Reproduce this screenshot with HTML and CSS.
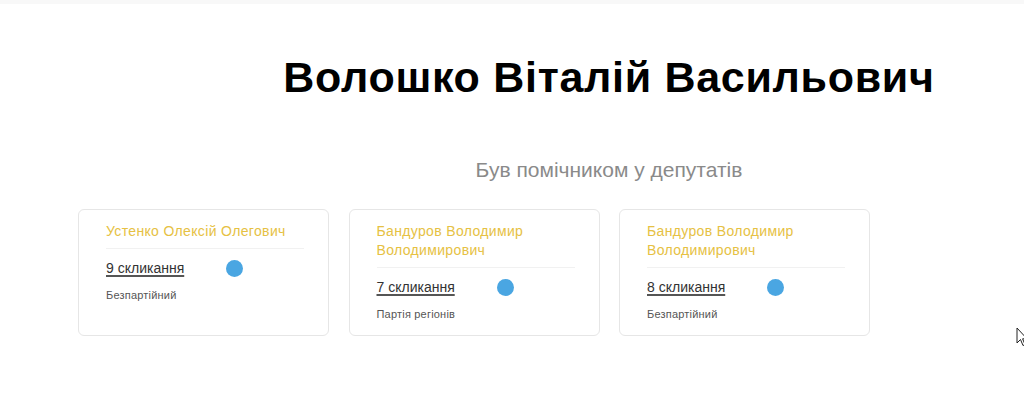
FILE: index.html
```html
<!DOCTYPE html>
<html lang="uk">
<head>
  <meta charset="UTF-8" />
  <meta name="viewport" content="width=device-width, initial-scale=1" />
  <title>Волошко Віталій Васильович</title>
  <link rel="stylesheet" href="styles.css">
</head>
<body>
  <div class="topbar"></div>

  <div class="page">
    <h1 class="person-name">Волошко Віталій Васильович</h1>
    <h2 class="section-title">Був помічником у депутатів</h2>

    <div class="cards">
      <div class="card">
        <a class="card-name" href="#">Устенко Олексій Олегович</a>
        <div class="card-row">
          <a class="convocation" href="#">9 скликання</a>
          <span class="dot"></span>
        </div>
        <div class="party">Безпартійний</div>
      </div>

      <div class="card">
        <a class="card-name" href="#">Бандуров Володимир Володимирович</a>
        <div class="card-row">
          <a class="convocation" href="#">7 скликання</a>
          <span class="dot"></span>
        </div>
        <div class="party">Партія регіонів</div>
      </div>

      <div class="card">
        <a class="card-name" href="#">Бандуров Володимир Володимирович</a>
        <div class="card-row">
          <a class="convocation" href="#">8 скликання</a>
          <span class="dot"></span>
        </div>
        <div class="party">Безпартійний</div>
      </div>
    </div>
  </div>

  <!-- курсор миші -->
  <svg class="cursor" width="12" height="20" viewBox="0 0 12 20">
    <path d="M1 1 L1 16 L4.5 12.5 L7 18.5 L9 17.6 L6.6 11.8 L11 11.8 Z" fill="#fff" stroke="#222" stroke-width="1"/>
  </svg>
</body>
</html>
```

FILE: styles.css
```css
html, body {
  margin: 0;
  background-color: #fff;
  color: #000;
  font-family: "Liberation Sans", Arial, sans-serif;
}

body {
  overflow: hidden;
  height: 420px;
  position: relative;
}

.topbar {
  height: 4px;
  background-color: #f8f8f8;
}

.page {
  width: 1062px;
  margin-left: 78px;
  text-align: center;
}

.person-name {
  margin: 49px 0 0 0;
  font-size: 43px;
  line-height: 48px;
  font-weight: bold;
  letter-spacing: 0.7px;
  color: #000;
}

.section-title {
  margin: 57px 0 0 0;
  font-size: 21px;
  line-height: 24px;
  font-weight: normal;
  color: #8a8a8a;
}

.cards {
  display: grid;
  grid-template-columns: repeat(4, 251px);
  gap: 19.5px;
  margin-top: 27px;
  text-align: left;
}

.card {
  border: 1px solid #e6e6e6;
  border-radius: 6px;
  padding: 12px 24px 10px 27px;
  min-height: 103px;
}

.card-name {
  display: block;
  font-size: 14px;
  line-height: 19px;
  letter-spacing: 0.35px;
  color: #e6c143;
  text-decoration: none;
  padding-bottom: 7px;
  border-bottom: 1px solid #f1f1f1;
}

.card-row {
  display: flex;
  align-items: center;
  margin-top: 10px;
  height: 19px;
}

.convocation {
  width: 120px;
  font-size: 14px;
  line-height: 19px;
  color: #333;
  text-decoration: underline;
  text-decoration-color: #555;
  text-decoration-thickness: 2px;
  text-underline-offset: 2px;
}

.dot {
  width: 17px;
  height: 17px;
  border-radius: 50%;
  background-color: #4aa6e2;
}

.party {
  margin-top: 10px;
  font-size: 11px;
  line-height: 15px;
  letter-spacing: 0.2px;
  color: #555;
}

.cursor {
  position: absolute;
  left: 1016px;
  top: 327px;
}
```
